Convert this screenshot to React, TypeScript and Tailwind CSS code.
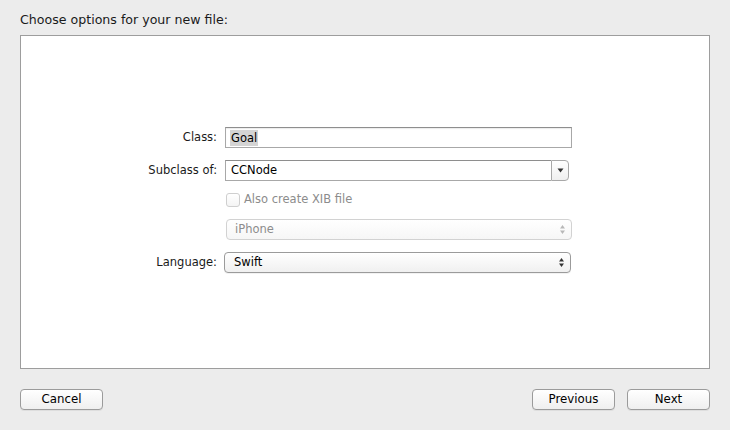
import React from "react";

const font = { fontFamily: '"DejaVu Sans", "Liberation Sans", sans-serif' };

function UpDown({ disabled }: { disabled?: boolean }) {
  const c = disabled ? "#b8b8b8" : "#333";
  return (
    <svg width="7" height="11" viewBox="0 0 7 11">
      <path d="M3.5 1 L6 4.5 L1 4.5 Z" fill={c} />
      <path d="M3.5 10 L6 6.5 L1 6.5 Z" fill={c} />
    </svg>
  );
}

function Button({ children }: { children: React.ReactNode }) {
  return (
    <div className="w-[83px] h-[21px] rounded-[4px] border border-[#9b9b9b] bg-gradient-to-b from-[#ffffff] to-[#efefef] shadow-[0_1px_0_rgba(0,0,0,0.06)] flex items-center justify-center pt-[1px] text-[11.8px] text-black">
      {children}
    </div>
  );
}

export default function App() {
  return (
    <div
      className="w-[730px] h-[430px] bg-[#ececec] flex flex-col px-[20px] text-black"
      style={font}
    >
      <div className="pt-[12px] h-[35px] text-[12.6px] leading-[15px] text-[#1a1a1a]">
        Choose options for your new file:
      </div>
      <div className="w-[690px] h-[334px] bg-white border border-[#9d9d9d] flex flex-col pt-[91px]">
        <div className="grid grid-cols-[196px_347px] gap-x-[8px] gap-y-[12px] text-[11.5px] items-center">
          <div className="text-right text-[#1a1a1a] pt-[1px]">Class:</div>
          <div className="h-[21px] border border-[#a8a8a8] border-t-[#8e8e8e] bg-white flex items-center pl-[4px] shadow-[inset_0_1px_1px_rgba(0,0,0,0.08)]">
            <span className="bg-[#d4d4d4] px-[1px] leading-[16px]">Goal</span>
          </div>

          <div className="text-right text-[#1a1a1a] pt-[1px]">Subclass of:</div>
          <div className="h-[21px] w-[344px] flex">
            <div className="flex-1 border border-[#a8a8a8] border-t-[#8e8e8e] border-r-0 bg-white flex items-center pl-[5px]">
              CCNode
            </div>
            <div className="w-[18px] border border-[#a8a8a8] rounded-r-[4px] bg-gradient-to-b from-[#ffffff] to-[#efefef] flex items-center justify-center">
              <svg width="7" height="5" viewBox="0 0 7 5">
                <path d="M0.5 0.5 L6.5 0.5 L3.5 4.5 Z" fill="#333" />
              </svg>
            </div>
          </div>

          <div />
          <div className="h-[14px] flex items-center gap-[4px] pl-[1px]">
            <div className="w-[14px] h-[14px] rounded-[3px] border border-[#cfcfcf] bg-gradient-to-b from-[#ffffff] to-[#f4f4f4]" />
            <span className="text-[#8c8c8c]">Also create XIB file</span>
          </div>

          <div />
          <div className="h-[21px] w-[346px] ml-[1px] rounded-[4px] border border-[#d2d2d2] bg-gradient-to-b from-[#ffffff] to-[#f6f6f6] flex items-center justify-between pl-[8px] pr-[5px] text-[#8c8c8c]">
            <span>iPhone</span>
            <UpDown disabled />
          </div>

          <div className="text-right text-[#1a1a1a] pt-[1px]">Language:</div>
          <div className="h-[21px] w-[347px] -ml-[1px] rounded-[4px] border border-[#9b9b9b] bg-gradient-to-b from-[#ffffff] to-[#f0f0f0] flex items-center justify-between pl-[9px] pr-[5px] shadow-[0_1px_0_rgba(0,0,0,0.05)]">
            <span>Swift</span>
            <UpDown />
          </div>
        </div>
      </div>
      <div className="flex justify-between items-start mt-[20px]">
        <Button>Cancel</Button>
        <div className="flex gap-[12px]">
          <Button>Previous</Button>
          <Button>Next</Button>
        </div>
      </div>
    </div>
  );
}
